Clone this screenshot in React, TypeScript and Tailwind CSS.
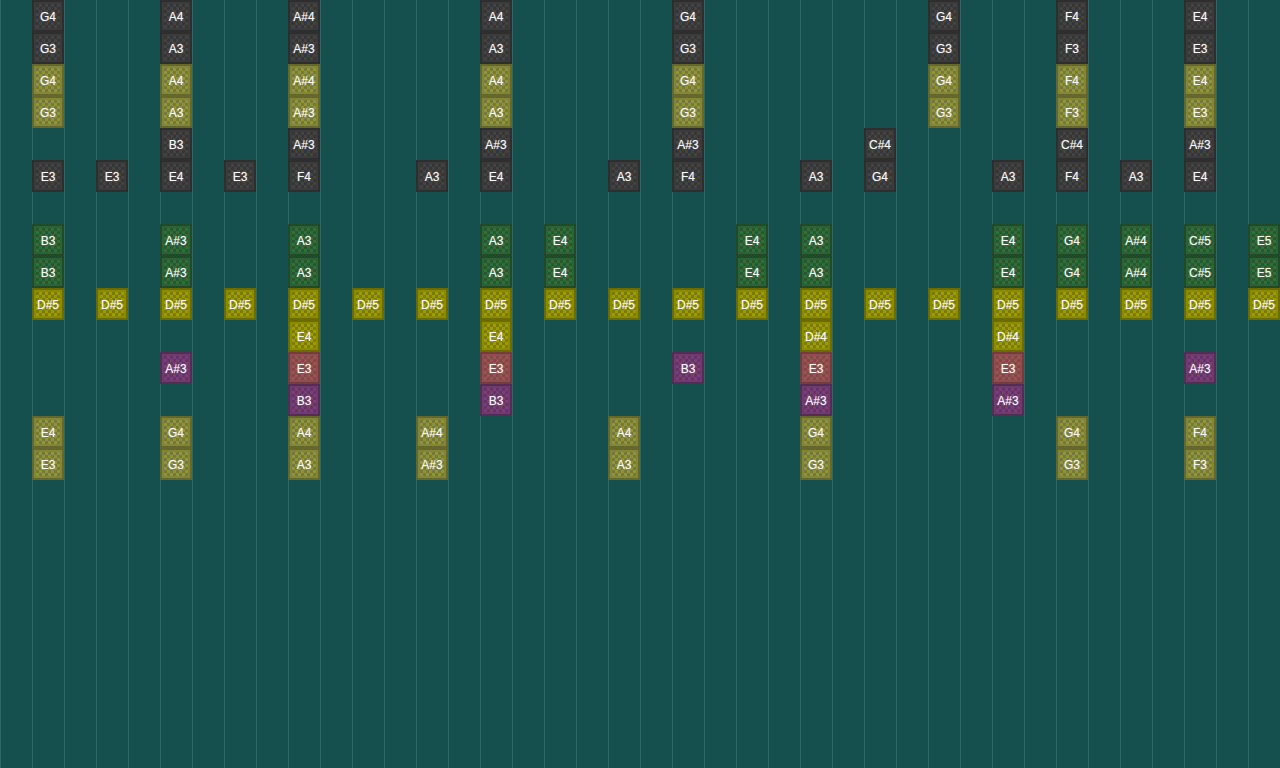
const tileStyles = {
  d: { edge: 'border-[#2e2e2e] bg-[#3b3b3b]', check: 'bg-[repeating-conic-gradient(#434343_0_25%,#363636_0_50%)]' },
  o: { edge: 'border-[#65682a] bg-[#828638]', check: 'bg-[repeating-conic-gradient(#8f943c_0_25%,#767a34_0_50%)]' },
  g: { edge: 'border-[#204a29] bg-[#2b6335]', check: 'bg-[repeating-conic-gradient(#316e3a_0_25%,#265830_0_50%)]' },
  y: { edge: 'border-[#6c6b00] bg-[#8c8b04]', check: 'bg-[repeating-conic-gradient(#9c9b04_0_25%,#7d7c04_0_50%)]' },
  p: { edge: 'border-[#552c55] bg-[#6f3a6e]', check: 'bg-[repeating-conic-gradient(#7a3f79_0_25%,#643463_0_50%)]' },
  r: { edge: 'border-[#733c3d] bg-[#8f4e4d]', check: 'bg-[repeating-conic-gradient(#995352_0_25%,#824746_0_50%)]' },
};

type Kind = keyof typeof tileStyles;

// each row: [column, note, colour]
const rows: [number, string, Kind][][] = [
  [[1, 'G4', 'd'], [5, 'A4', 'd'], [9, 'A#4', 'd'], [15, 'A4', 'd'], [21, 'G4', 'd'], [29, 'G4', 'd'], [33, 'F4', 'd'], [37, 'E4', 'd']],
  [[1, 'G3', 'd'], [5, 'A3', 'd'], [9, 'A#3', 'd'], [15, 'A3', 'd'], [21, 'G3', 'd'], [29, 'G3', 'd'], [33, 'F3', 'd'], [37, 'E3', 'd']],
  [[1, 'G4', 'o'], [5, 'A4', 'o'], [9, 'A#4', 'o'], [15, 'A4', 'o'], [21, 'G4', 'o'], [29, 'G4', 'o'], [33, 'F4', 'o'], [37, 'E4', 'o']],
  [[1, 'G3', 'o'], [5, 'A3', 'o'], [9, 'A#3', 'o'], [15, 'A3', 'o'], [21, 'G3', 'o'], [29, 'G3', 'o'], [33, 'F3', 'o'], [37, 'E3', 'o']],
  [[5, 'B3', 'd'], [9, 'A#3', 'd'], [15, 'A#3', 'd'], [21, 'A#3', 'd'], [27, 'C#4', 'd'], [33, 'C#4', 'd'], [37, 'A#3', 'd']],
  [[1, 'E3', 'd'], [3, 'E3', 'd'], [5, 'E4', 'd'], [7, 'E3', 'd'], [9, 'F4', 'd'], [13, 'A3', 'd'], [15, 'E4', 'd'], [19, 'A3', 'd'], [21, 'F4', 'd'], [25, 'A3', 'd'], [27, 'G4', 'd'], [31, 'A3', 'd'], [33, 'F4', 'd'], [35, 'A3', 'd'], [37, 'E4', 'd']],
  [],
  [[1, 'B3', 'g'], [5, 'A#3', 'g'], [9, 'A3', 'g'], [15, 'A3', 'g'], [17, 'E4', 'g'], [23, 'E4', 'g'], [25, 'A3', 'g'], [31, 'E4', 'g'], [33, 'G4', 'g'], [35, 'A#4', 'g'], [37, 'C#5', 'g'], [39, 'E5', 'g']],
  [[1, 'B3', 'g'], [5, 'A#3', 'g'], [9, 'A3', 'g'], [15, 'A3', 'g'], [17, 'E4', 'g'], [23, 'E4', 'g'], [25, 'A3', 'g'], [31, 'E4', 'g'], [33, 'G4', 'g'], [35, 'A#4', 'g'], [37, 'C#5', 'g'], [39, 'E5', 'g']],
  [1, 3, 5, 7, 9, 11, 13, 15, 17, 19, 21, 23, 25, 27, 29, 31, 33, 35, 37, 39].map((c) => [c, 'D#5', 'y'] as [number, string, Kind]),
  [[9, 'E4', 'y'], [15, 'E4', 'y'], [25, 'D#4', 'y'], [31, 'D#4', 'y']],
  [[5, 'A#3', 'p'], [9, 'E3', 'r'], [15, 'E3', 'r'], [21, 'B3', 'p'], [25, 'E3', 'r'], [31, 'E3', 'r'], [37, 'A#3', 'p']],
  [[9, 'B3', 'p'], [15, 'B3', 'p'], [25, 'A#3', 'p'], [31, 'A#3', 'p']],
  [[1, 'E4', 'o'], [5, 'G4', 'o'], [9, 'A4', 'o'], [13, 'A#4', 'o'], [19, 'A4', 'o'], [25, 'G4', 'o'], [33, 'G4', 'o'], [37, 'F4', 'o']],
  [[1, 'E3', 'o'], [5, 'G3', 'o'], [9, 'A3', 'o'], [13, 'A#3', 'o'], [19, 'A3', 'o'], [25, 'G3', 'o'], [33, 'G3', 'o'], [37, 'F3', 'o']],
];

function Tile({ note, kind }: { note: string; kind: Kind }) {
  const s = tileStyles[kind];
  return (
    <div className={`w-8 h-8 border-2 p-0.5 ${s.edge}`}>
      <div
        className={`w-full h-full bg-[length:6px_6px] flex items-center justify-center pt-0.5 text-[12px] text-[#f6f6f6] [text-shadow:0_0_1px_rgba(255,255,255,0.5)] ${s.check}`}
      >
        {note}
      </div>
    </div>
  );
}

export default function App() {
  return (
    <div className="w-[1280px] h-[768px] overflow-hidden bg-[#15504e] bg-[linear-gradient(to_right,#2f6866_1px,transparent_1px)] bg-[length:32px_32px] font-['Liberation_Sans',Arial,sans-serif]">
      {rows.map((row, r) => (
        <div key={r} className="flex h-8">
          {Array.from({ length: 40 }, (_, c) => {
            const cell = row.find((t) => t[0] === c);
            return (
              <div key={c} className="w-8 h-8 shrink-0">
                {cell && <Tile note={cell[1]} kind={cell[2]} />}
              </div>
            );
          })}
        </div>
      ))}
    </div>
  );
}
